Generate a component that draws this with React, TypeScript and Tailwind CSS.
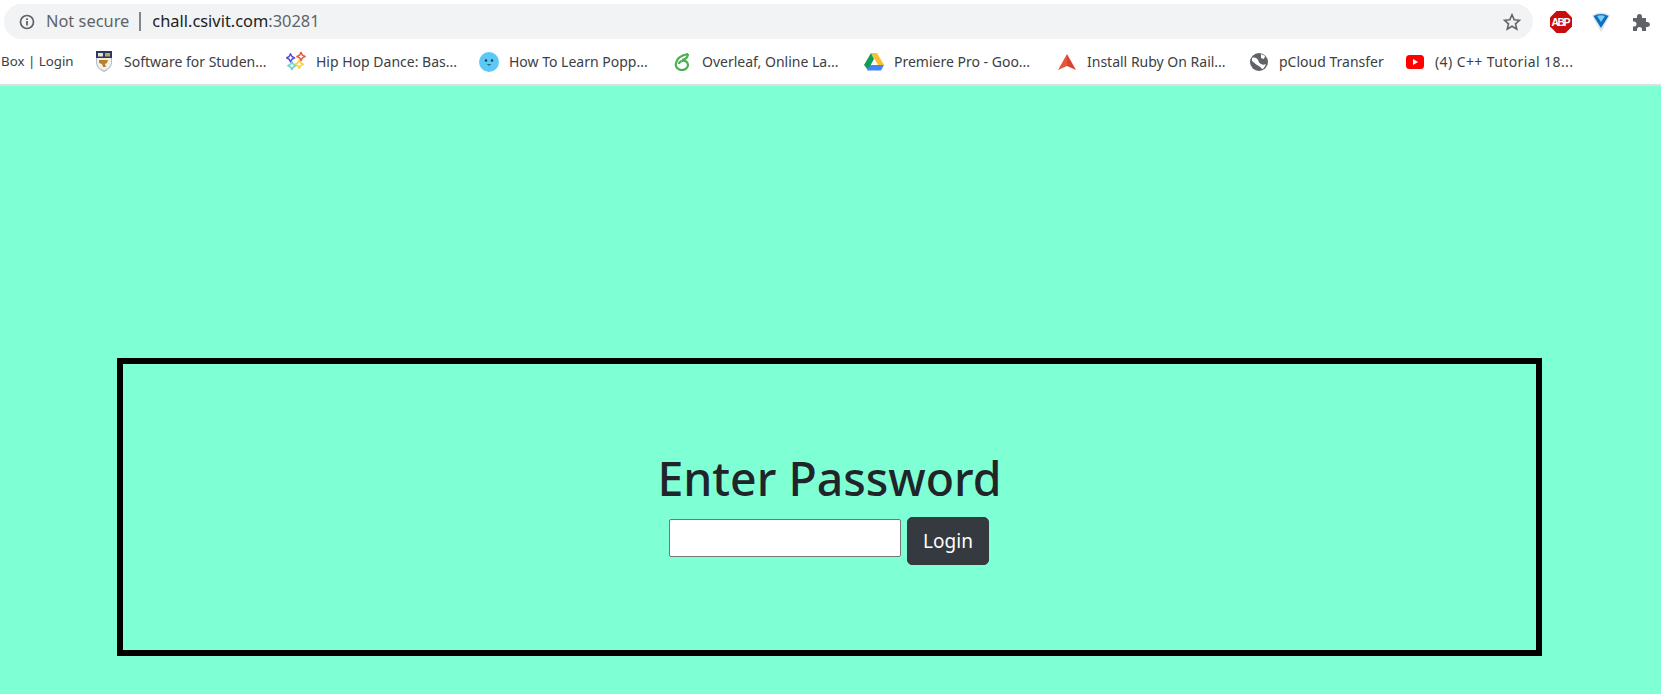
import { ReactNode } from 'react';

function InfoIcon() {
  return (
    <svg width="16" height="16" viewBox="0 0 16 16" fill="none" className="shrink-0">
      <circle cx="8" cy="8" r="6.500" stroke="#5f6368" strokeWidth="1.700" />
      <rect x="7.100" y="7" width="1.800" height="4.500" fill="#5f6368" />
      <rect x="7.100" y="4.300" width="1.800" height="1.700" fill="#5f6368" />
    </svg>
  );
}

function Crest() {
  return (
    <svg width="16" height="21" viewBox="0 0 16 21">
      <path d="M0 0h16v11c0 5-4 8-8 10-4-2-8-5-8-10z" fill="#aebccb" />
      <path d="M1 7h14v4c0 4-3 7-7 8.500-4-1.500-7-4.500-7-8.500z" fill="#f3f1e8" />
      <rect x="0" y="0" width="16" height="7" fill="#2b3a63" />
      <rect x="2" y="2" width="5" height="3.500" fill="#e8e2d0" />
      <rect x="9" y="2" width="5" height="3.500" fill="#c9a94e" />
      <path d="M3 9h9l-1 3-2 1 1 3H7l-1-3-3-1z" fill="#b9802f" />
    </svg>
  );
}

function Sparkles() {
  return (
    <svg width="22" height="21" viewBox="0 0 22 21" fill="#fff" strokeWidth="1.700" strokeLinejoin="round">
      <path d="M4.500 1.500l1.500 3 3 1.500-3 1.500-1.500 3-1.500-3-3-1.500 3-1.500z" stroke="#5b4ce0" transform="translate(.5 .5)" />
      <path d="M16.500.5l1.500 3 3 1.500-3 1.500-1.500 3-1.500-3-3-1.500 3-1.500z" stroke="#ef5a3c" />
      <path d="M6.500 11.500l1.500 3 3 1.500-3 1.500-1.500 3-1.500-3-3-1.500 3-1.500z" stroke="#6fd0c6" transform="translate(0 -1)" />
      <path d="M14.500 9l1.500 3 3 1.500-3 1.500-1.500 3-1.500-3-3-1.500 3-1.500z" stroke="#f7d23e" />
    </svg>
  );
}

function Smiley() {
  return (
    <svg width="20" height="20" viewBox="0 0 20 20">
      <circle cx="10" cy="10" r="10" fill="#5cc8f5" />
      <circle cx="7" cy="8.500" r="1.200" fill="#1d3a4a" />
      <circle cx="13" cy="8.500" r="1.200" fill="#1d3a4a" />
      <path d="M8.500 12.500q1.500 1 3 0" stroke="#1d3a4a" fill="none" />
    </svg>
  );
}

function Overleaf() {
  return (
    <svg width="16" height="18" viewBox="0 0 16 18" fill="none" stroke="#4cae4f" strokeWidth="2.200">
      <path d="M14 1C9 2 3 5 2 10c-1 4 2 7 6 7 3 0 6-2 6-5 0-3-3-5-6-4-2 .5-3 2-3 3" />
      <path d="M14 1c0 3-2 5-6 6" />
    </svg>
  );
}

function Drive() {
  return (
    <svg width="20" height="18" viewBox="0 0 20 18">
      <path d="M7 0h6l7 12h-6z" fill="#fbc02d" />
      <path d="M7 0l3 6-6 11-4-5z" fill="#0f9d58" />
      <path d="M6 12h14l-3 5.500H3z" fill="#4285f4" />
    </svg>
  );
}

function RubyArrow() {
  return (
    <svg width="18" height="16" viewBox="0 0 18 16">
      <path d="M9 0L0 16l9-4z" fill="#e4573d" />
      <path d="M9 0l9 16-9-4z" fill="#d9432f" />
    </svg>
  );
}

function Globe() {
  return (
    <svg width="18" height="18" viewBox="0 0 18 18">
      <circle cx="9" cy="9" r="9" fill="#5f6368" />
      <path d="M2 5c3-1 5 0 6 2s1 3 3 4 3 1 5 0c-1 3-3 5-4 5-1-2-3-3-5-4S4 9 2 8z" fill="#fff" />
      <path d="M11 1l4 2-1 3-3-1z" fill="#fff" />
    </svg>
  );
}

function Youtube() {
  return (
    <svg width="18" height="14" viewBox="0 0 18 14">
      <rect width="18" height="14" rx="3.500" fill="#f00" />
      <path d="M7 4l5 3-5 3z" fill="#fff" />
    </svg>
  );
}

function Puzzle() {
  return (
    <svg width="18" height="18" viewBox="0 0 18 18" fill="#5f6368">
      <path d="M1 5h4V3.500a2.500 2.500 0 015 0V5h4v4h1.500a2.500 2.500 0 010 5H14v4h-4v-1.500a2.500 2.500 0 00-5 0V18H1v-4.500h1a2.500 2.500 0 000-5H1z" />
    </svg>
  );
}

function Star() {
  return (
    <svg width="18" height="18" viewBox="0 0 18 18" fill="none" stroke="#5f6368" strokeWidth="1.600">
      <path d="M9 1.800l2.200 5 5.300.5-4 3.500 1.200 5.300L9 13.300l-4.700 2.800 1.200-5.300-4-3.500 5.300-.5z" />
    </svg>
  );
}

function Adblock() {
  return (
    <svg width="22" height="22" viewBox="0 0 22 22">
      <path d="M6.500 0h9L22 6.500v9L15.500 22h-9L0 15.500v-9z" fill="#c70d0d" />
      <text x="11" y="15" textAnchor="middle" fontSize="10.500" fontWeight="700" fill="#fff" fontFamily="Liberation Sans, sans-serif" textLength="19">ABP</text>
    </svg>
  );
}

function Gem() {
  return (
    <svg width="18" height="20" viewBox="0 0 18 20">
      <path d="M0 3q9-5 18 0l-7 14-2 3-2-3z" fill="#dfe3e8" />
      <path d="M1.500 4q7.500-4 15 0L9 16z" fill="#0b6fc0" />
      <path d="M5 4q4-1.500 8 0L9 10z" fill="#79ccf5" />
    </svg>
  );
}

const bookmarks: { icon: ReactNode; label: string; width: string }[] = [
  { icon: <Crest />, label: 'Software for Studen...', width: 'w-[192px]' },
  { icon: <Sparkles />, label: 'Hip Hop Dance: Bas...', width: 'w-[193px]' },
  { icon: <Smiley />, label: 'How To Learn Popp...', width: 'w-[193px]' },
  { icon: <Overleaf />, label: 'Overleaf, Online La...', width: 'w-[192px]' },
  { icon: <Drive />, label: 'Premiere Pro - Goo...', width: 'w-[193px]' },
  { icon: <RubyArrow />, label: 'Install Ruby On Rail...', width: 'w-[192px]' },
  { icon: <Globe />, label: 'pCloud Transfer', width: 'w-[156px]' },
  { icon: <Youtube />, label: '(4) C++ Tutorial 18...', width: 'w-[192px] tracking-[0.4px]' },
];

export default function App() {
  return (
    <div className="min-h-screen bg-[#7fffd4] font-['Noto_Sans',sans-serif]">
      {/* Browser chrome */}
      <header className="h-[86px] bg-white border-b-2 border-[#dedfe0]">
        <div className="flex items-start h-[43px] pt-1 pl-1">
          <div className="flex items-center w-[1529px] h-[35px] rounded-full bg-[#f1f3f4] pl-[15px] pr-[12px]">
            <InfoIcon />
            <span className="ml-[11px] text-[16.400px] text-[#5f6368]">Not secure</span>
            <span className="ml-[10px] w-[2px] h-[19px] bg-[#80868b]" />
            <span className="ml-[11px] text-[16.400px] text-[#202124]">
              chall.csivit.com<span className="text-[#5f6368]">:30281</span>
            </span>
            <span className="ml-auto"><Star /></span>
          </div>
          <div className="flex items-center h-[35px] ml-[17px]"><Adblock /></div>
          <div className="flex items-center h-[35px] ml-[20px]"><Gem /></div>
          <div className="flex items-center h-[35px] ml-[22px]"><Puzzle /></div>
        </div>
        <nav className="flex items-center h-[37px] text-[14px] text-[#3c4043] whitespace-nowrap">
          <span className="w-[94px] pl-px text-[13.300px]">Box | Login</span>
          {bookmarks.map((b) => (
            <div key={b.label} className={`flex items-center ${b.width}`}>
              <span className="flex justify-center w-[20px] shrink-0">{b.icon}</span>
              <span className="ml-[10px]">{b.label}</span>
            </div>
          ))}
        </nav>
      </header>

      {/* Page */}
      <main className="pt-[272px] pl-[117px]">
        <div className="flex flex-col items-center w-[1425px] h-[298px] border-[6px] border-black pt-[85px] text-[#212529]">
          <h1 className="text-[46.400px] leading-[58px] font-medium">Enter Password</h1>
          <form className="flex items-start mt-[10px] -ml-px">
            <input type="password" className="w-[232px] h-[38px] mt-[2px] bg-white border border-[#767676] rounded-[2px]" />
            <button type="button" className="ml-[6px] w-[82px] h-[48px] rounded-[5px] bg-[#343a40] border border-[#343a40] text-white text-[19px]">
              Login
            </button>
          </form>
        </div>
      </main>
    </div>
  );
}
